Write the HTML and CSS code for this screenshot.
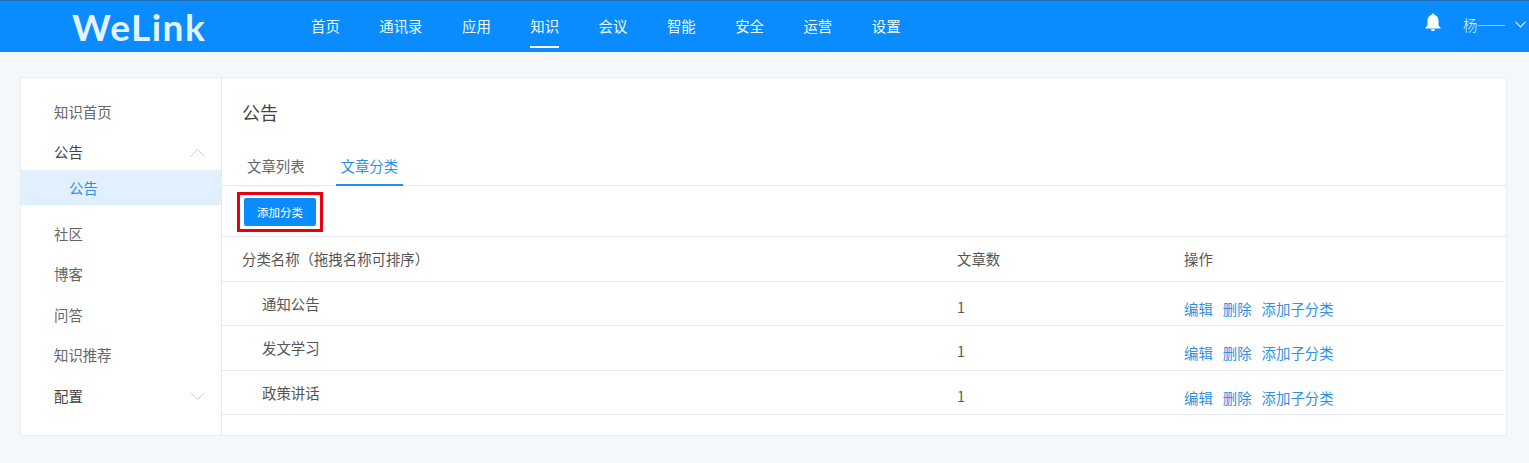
FILE: index.html
```html
<!DOCTYPE html>
<html lang="zh-CN">
<head>
<meta charset="utf-8">
<title>WeLink</title>
<link rel="stylesheet" href="styles.css">
</head>
<body>
<header class="topbar">
  <div class="logo">WeLink</div>
  <nav class="nav">
    <a class="nav-item">首页</a>
    <a class="nav-item">通讯录</a>
    <a class="nav-item">应用</a>
    <a class="nav-item active">知识</a>
    <a class="nav-item">会议</a>
    <a class="nav-item">智能</a>
    <a class="nav-item">安全</a>
    <a class="nav-item">运营</a>
    <a class="nav-item">设置</a>
  </nav>
  <div class="user">
    <svg class="bell" width="18" height="20" viewBox="0 0 18 20"><path fill="#fff" d="M9 0.5c.9 0 1.5.6 1.5 1.5 2.7.7 4 3 4 5.6v4.2c0 1 .7 1.7 2 2.8v.9H1.500v-.9c1.300-1.100 2-1.800 2-2.800V7.600c0-2.600 1.300-4.900 4-5.600C7.500 1.100 8.100.5 9 .5z"/><path fill="#fff" d="M6.800 16.300h4.400c-.2 1.200-1.100 2-2.200 2s-2-.8-2.200-2z"/></svg>
    <span class="user-name">杨——</span>
    <svg class="user-caret" width="11" height="7" viewBox="0 0 11 7"><path fill="none" stroke="#d9eeff" stroke-width="1.200" d="M.5 .8l5 5 5-5"/></svg>
  </div>
</header>

<main class="page">
  <div class="card">
    <aside class="side">
      <div class="side-item">知识首页</div>
      <div class="side-item side-group">公告<svg class="caret" width="15" height="8" viewBox="0 0 15 8"><path fill="none" stroke="#c9ced4" d="M.5 7.500l7-7 7 7"/></svg></div>
      <div class="side-sub">公告</div>
      <div class="side-item side-after">社区</div>
      <div class="side-item">博客</div>
      <div class="side-item">问答</div>
      <div class="side-item">知识推荐</div>
      <div class="side-item side-group">配置<svg class="caret" width="15" height="8" viewBox="0 0 15 8"><path fill="none" stroke="#c9ced4" d="M.5 .5l7 7 7-7"/></svg></div>
    </aside>
    <section class="content">
      <h1 class="title">公告</h1>
      <div class="tabs">
        <span class="tab">文章列表</span>
        <span class="tab tab-active">文章分类</span>
      </div>
      <div class="toolbar">
        <div class="highlight"><button class="btn">添加分类</button></div>
      </div>
      <div class="row row-head">
        <span class="c-name">分类名称（拖拽名称可排序）</span>
        <span class="c-count">文章数</span>
        <span class="c-ops">操作</span>
      </div>
      <div class="row">
        <span class="c-name c-indent">通知公告</span>
        <span class="c-count">1</span>
        <span class="c-ops"><a class="op">编辑</a><a class="op">删除</a><a class="op">添加子分类</a></span>
      </div>
      <div class="row">
        <span class="c-name c-indent">发文学习</span>
        <span class="c-count">1</span>
        <span class="c-ops"><a class="op">编辑</a><a class="op">删除</a><a class="op">添加子分类</a></span>
      </div>
      <div class="row">
        <span class="c-name c-indent">政策讲话</span>
        <span class="c-count">1</span>
        <span class="c-ops"><a class="op">编辑</a><a class="op">删除</a><a class="op">添加子分类</a></span>
      </div>
    </section>
  </div>
</main>
</body>
</html>
```
FILE: styles.css
```css
* { box-sizing: border-box; }
html, body { margin: 0; padding: 0; }
body {
  height: 463px;
  overflow: hidden;
  background: #f5f8fb;
  color: #595959;
  font-family: "Noto Sans CJK SC", "Liberation Sans", sans-serif;
  font-size: 14.4px;
}
.topbar {
  display: flex;
  align-items: center;
  height: 52px;
  padding-left: 72px;
  background: #0a8cff;
  border-top: 1px solid #1f6fb5;
  color: #fff;
}
.logo {
  width: 239px;
  font-family: "Lato", sans-serif;
  font-weight: 700;
  font-size: 37px;
  line-height: 46px;
  letter-spacing: 1.500px;
  color: #e2f2ff;
}
.nav {
  display: flex;
  gap: 39.500px;
  height: 100%;
}
.nav-item {
  display: flex;
  align-items: center;
  height: 100%;
  padding-bottom: 2px;
  border-bottom: 0;
  color: #f2f9ff;
  position: relative;
}
.nav-item.active::after {
  content: "";
  position: absolute;
  left: 0;
  right: 0;
  bottom: 4px;
  height: 2px;
  background: #fff;
}
.user {
  display: flex;
  align-items: center;
  margin-left: auto;
  padding-right: 3px;
  padding-bottom: 4px;
  color: #e6f4ff;
}
.bell { margin-right: 21px; margin-top: -3px; }
.user-name { width: 52px; font-size: 14.4px; white-space: nowrap; letter-spacing: -0.500px; font-weight: 300; }
.page { padding: 25px 22px 0 20px; }
.card {
  display: flex;
  height: 359px;
  background: #fff;
  border: 1px solid #e9edf1;
}
.side {
  flex: none;
  width: 201px;
  padding-top: 13px;
  border-right: 1px solid #e3e7eb;
}
.side-item {
  display: flex;
  align-items: center;
  justify-content: space-between;
  height: 40.500px;
  padding: 0 16px 0 33px;
  color: #666;
}
.side-group { color: #444; }
.side-sub {
  display: flex;
  align-items: center;
  height: 35px;
  margin-top: -2px;
  padding-left: 48px;
  background: #e1f0fe;
  color: #2f8fe6;
}
.side-after { margin-top: 8px; }
.caret { margin-top: 2px; }
.content {
  flex: 1;
  min-width: 0;
}
.title {
  margin: 0;
  height: 71px;
  padding: 21px 0 0 20px;
  font-size: 18px;
  font-weight: 400;
  line-height: 27px;
  color: #444;
}
.tabs {
  display: flex;
  height: 37px;
  padding-left: 20px;
  border-bottom: 1px solid #e6eaee;
  gap: 26px;
}
.tab {
  height: 37px;
  padding: 5px 5px 0;
  line-height: 24px;
  color: #666;
}
.tab-active {
  padding-left: 5px;
  color: #2f8fe6;
  border-bottom: 2px solid #1f8ff0;
}
.toolbar {
  height: 51px;
  padding: 6px 0 0 15px;
  border-bottom: 1px solid #e6eaee;
}
.highlight {
  display: inline-flex;
  padding: 3px;
  margin: 0;
  border: 3px solid #e60012;
  width: 86px;
  height: 40px;
}
.btn {
  display: block;
  width: 72px;
  height: 28px;
  margin: 3px 0 0 1px;
  padding: 0;
  border: 0;
  border-radius: 2px;
  background: #0a8cff;
  color: #fff;
  font: inherit;
  font-size: 11.500px;
  margin-top: 0;
}
.row {
  display: grid;
  grid-template-columns: 715px 227px 1fr;
  height: 44.400px;
  margin-right: 2px;
  padding-left: 20px;
  border-bottom: 1px solid #e6eaee;
  line-height: 22px;
}
.row-head { height: 45px; padding-top: 11px; color: #555; }
.c-name { padding-top: 11px; color: #555; }
.row-head .c-name, .row-head .c-count, .row-head .c-ops { padding-top: 0; }
.c-indent { padding-left: 20px; }
.c-count { padding-top: 14px; }
.c-ops { padding-top: 16px; }
.op { margin-right: 10px; color: #2f8fe6; }
```
